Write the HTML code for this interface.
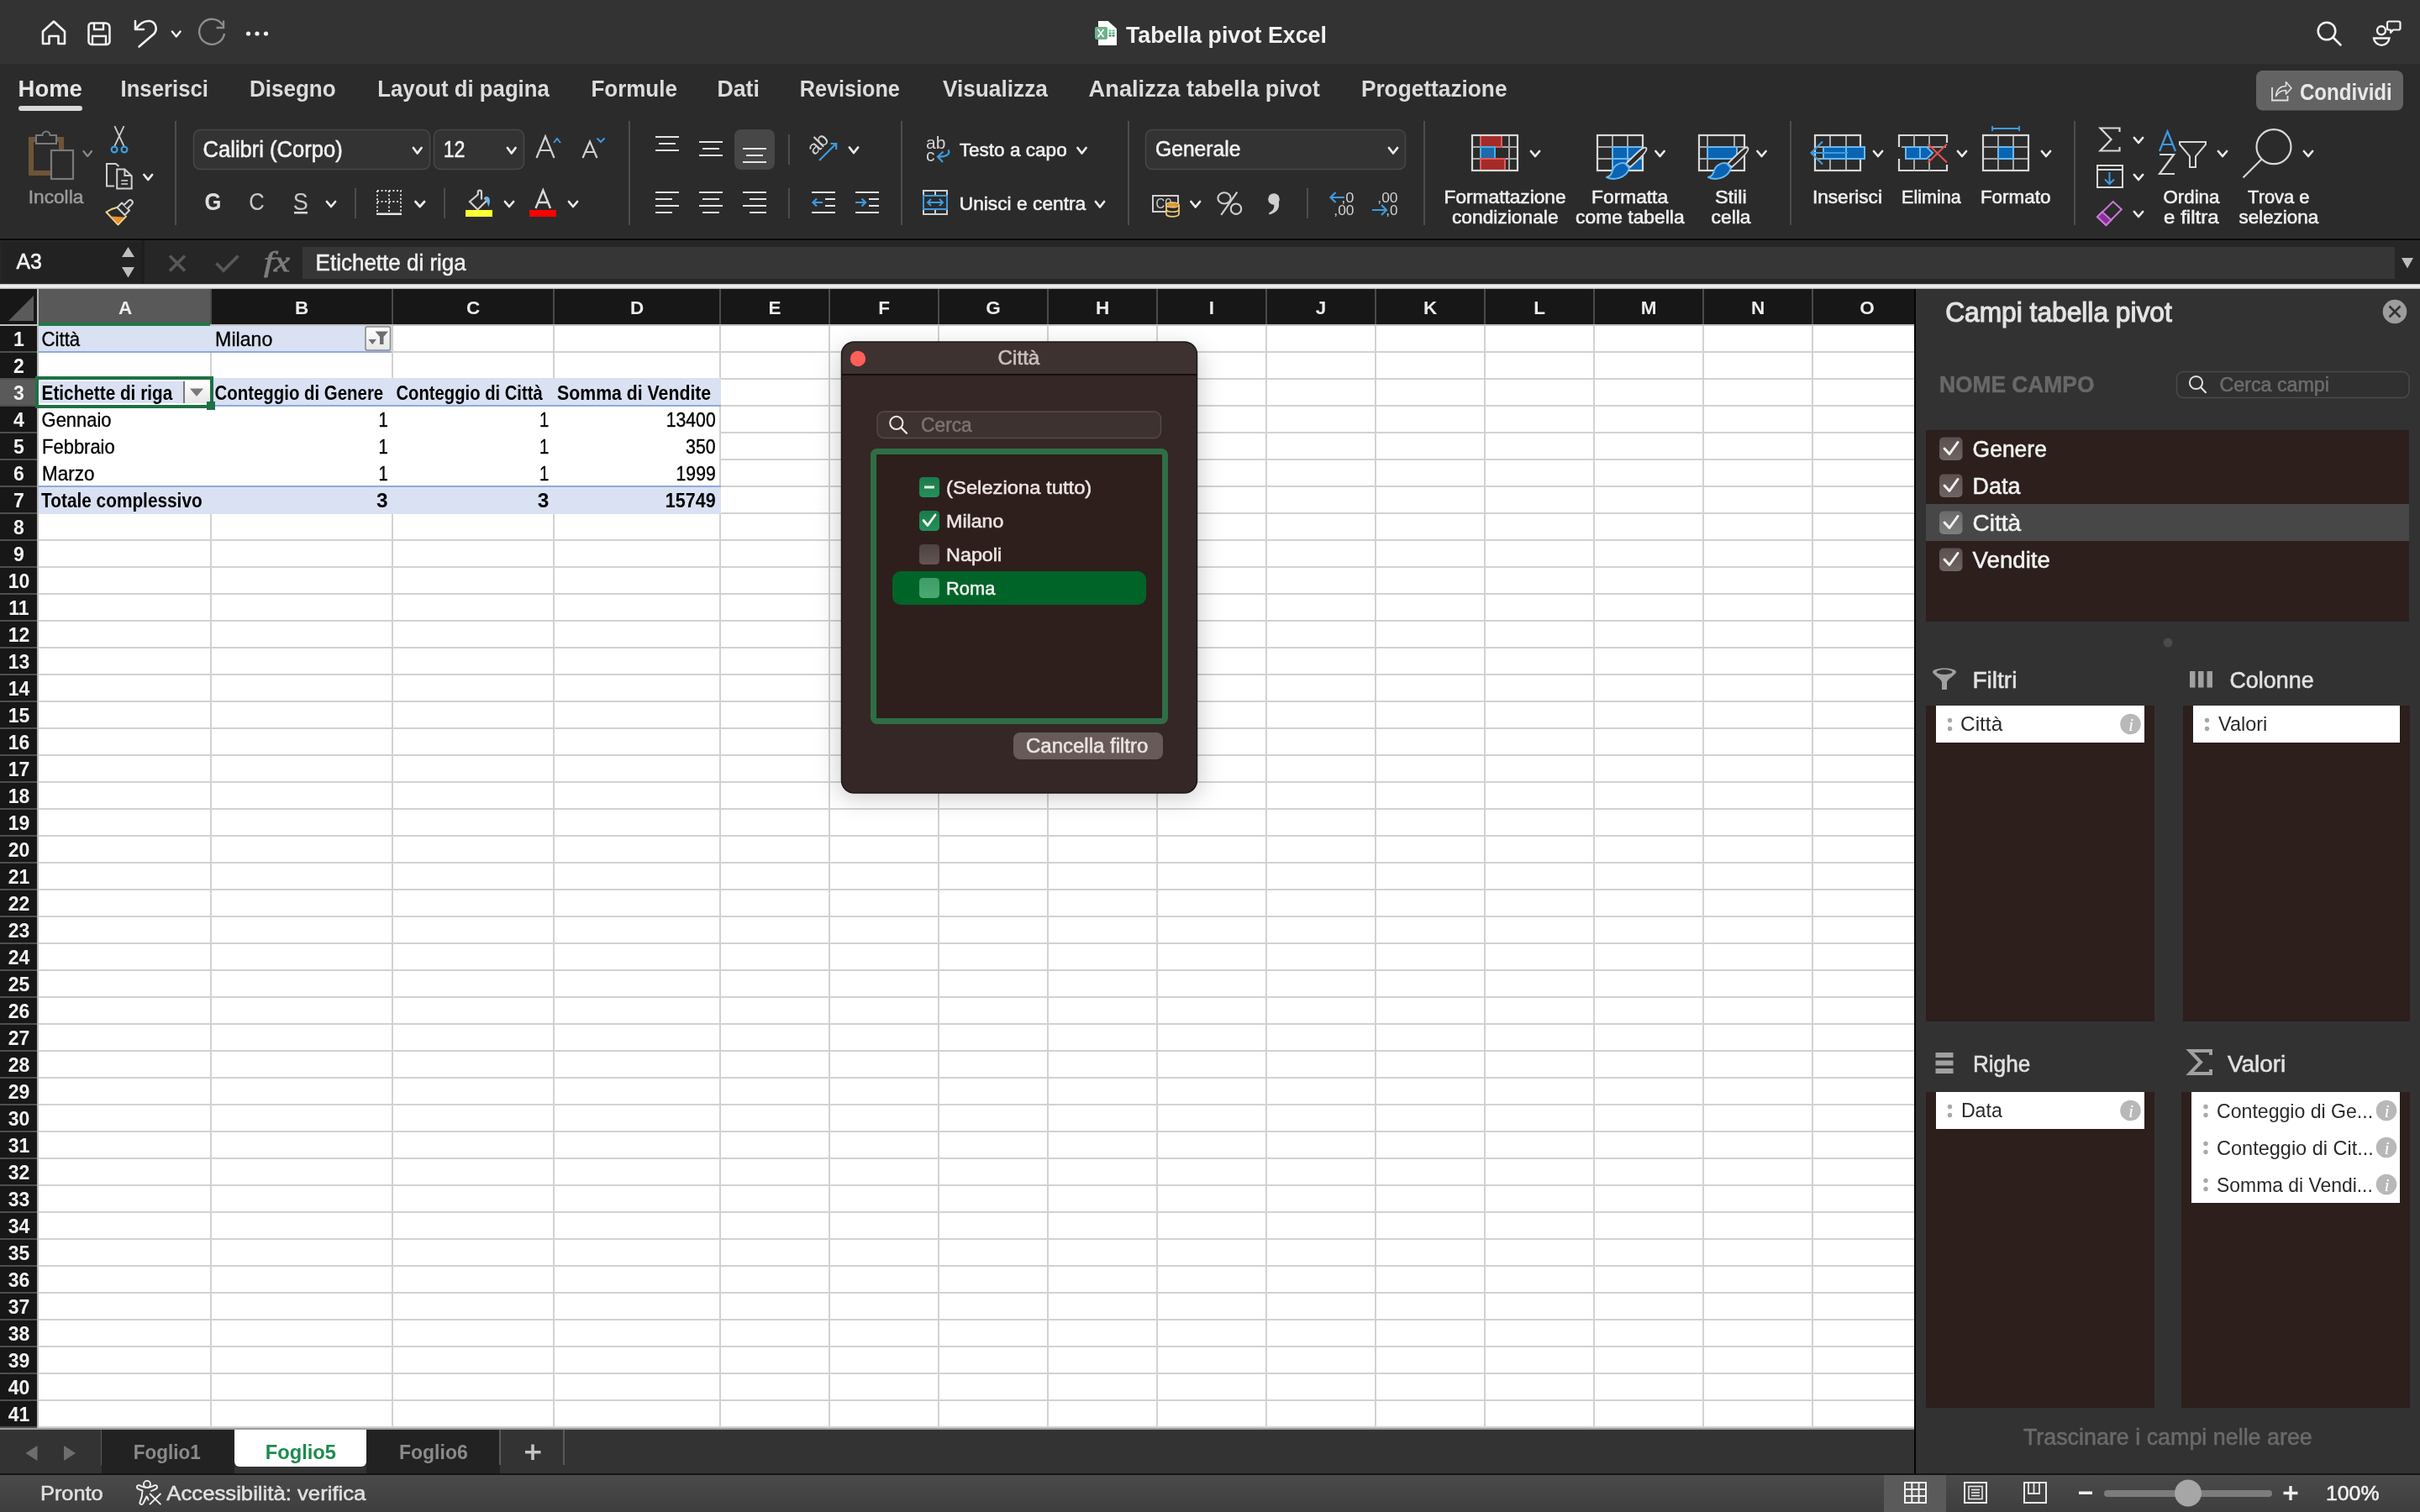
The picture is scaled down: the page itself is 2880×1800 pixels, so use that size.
<!DOCTYPE html>
<html lang="it"><head><meta charset="utf-8"><title>Tabella pivot Excel</title>
<style>
html,body{margin:0;padding:0;background:#2b2b2b;overflow:hidden;width:2880px;height:1800px}
svg{display:block;position:absolute;left:0;top:0}

</style></head><body>
<svg width="2880" height="1800" viewBox="0 0 2880 1800" style="will-change:transform">
<rect x="0" y="0" width="2880" height="76" fill="#333333" />
<rect x="0" y="76" width="2880" height="208" fill="#2b2b2b" />
<rect x="0" y="284" width="2880" height="2" fill="#0a0a0a" />
<path d="M51,52 V37.5 L64,25.5 L77,37.5 V52 H69.5 V43 H58.5 V52 Z" fill="none" stroke="#f2f2f2" stroke-width="2.6" stroke-linejoin="round"/>
<path d="M109,27.5 H125 Q130.5,27.5 130.5,33 V49.5 A3.5,3.5 0 0 1 127,53 H109 A3.5,3.5 0 0 1 105.5,49.5 V31 A3.5,3.5 0 0 1 109,27.5 Z" fill="none" stroke="#f2f2f2" stroke-width="2.5" />
<path d="M112,28 V35 H123 V28" fill="none" stroke="#f2f2f2" stroke-width="2.4" />
<path d="M110,52 V43 H126 V52" fill="none" stroke="#f2f2f2" stroke-width="2.4" />
<path d="M161,25 V35 H171" fill="none" stroke="#f2f2f2" stroke-width="2.6" stroke-linecap="round" stroke-linejoin="round"/>
<path d="M161.5,34.5 C167,27 173,24.5 178,25 C185,26 188,34 183.5,40 L165.5,55.5" fill="none" stroke="#f2f2f2" stroke-width="2.6" stroke-linecap="round"/>
<path d="M204.9,37.5 L209.75,43.5 L214.6,37.5" fill="none" stroke="#f2f2f2" stroke-width="2.4" stroke-linecap="round" stroke-linejoin="round"/>
<path d="M265,30 A15,15 0 1 0 267,40" fill="none" stroke="#8c8c8c" stroke-width="2.4" />
<path d="M266,24.5 V33 H257.5" fill="none" stroke="#8c8c8c" stroke-width="2.4" />
<circle cx="295.5" cy="40" r="2.6" fill="#f2f2f2" />
<circle cx="306" cy="40" r="2.6" fill="#f2f2f2" />
<circle cx="316.5" cy="40" r="2.6" fill="#f2f2f2" />
<path d="M1307,25 H1318.6 L1329,34.3 V54 H1307 Z" fill="#ffffff" />
<rect x="1319.5" y="35.5" width="3.0" height="2.0" fill="#5cc390" />
<rect x="1323.5" y="35.5" width="3.0" height="2.0" fill="#5cc390" />
<rect x="1319.5" y="38.5" width="3.0" height="2.0" fill="#4aa67a" />
<rect x="1323.5" y="38.5" width="3.0" height="2.0" fill="#4aa67a" />
<rect x="1319.5" y="41.5" width="3.0" height="2.0" fill="#3f7a5e" />
<rect x="1323.5" y="41.5" width="3.0" height="2.0" fill="#3f7a5e" />
<rect x="1303" y="32" width="15" height="15" fill="#6fb08e" rx="2" />
<path d="M1306.5,35 L1313.5,44 M1313.5,35 L1306.5,44" fill="none" stroke="#ffffff" stroke-width="1.6" />
<text x="1339.9" y="50.5" font-family="Liberation Sans" font-size="28.20" font-weight="bold" fill="#f2f2f2" textLength="239.0" lengthAdjust="spacingAndGlyphs" >Tabella pivot Excel</text>
<circle cx="2769" cy="37" r="10.3" fill="none" stroke="#f2f2f2" stroke-width="2.5" />
<line x1="2776.5" y1="44.5" x2="2785.5" y2="53.5" stroke="#f2f2f2" stroke-width="2.6" stroke-linecap="round"/>
<circle cx="2834" cy="36.3" r="5" fill="none" stroke="#f2f2f2" stroke-width="2.4" />
<path d="M2825,45.5 H2843.5 A9.3,9.3 0 0 1 2825,45.5 Z" fill="none" stroke="#f2f2f2" stroke-width="2.4" />
<path d="M2843,25.5 H2854.5 A2,2 0 0 1 2856.5,27.5 V33.5 A2,2 0 0 1 2854.5,35.5 H2848 L2845,39 V35.5 H2843 A2,2 0 0 1 2841,33.5 V27.5 A2,2 0 0 1 2843,25.5 Z" fill="none" stroke="#f2f2f2" stroke-width="2.2" stroke-linejoin="round"/>
<text x="21.6" y="114.5" font-family="Liberation Sans" font-size="28.05" font-weight="bold" fill="#e6e6e6" textLength="76.3" lengthAdjust="spacingAndGlyphs" >Home</text>
<text x="143.5" y="114.5" font-family="Liberation Sans" font-size="28.05" font-weight="bold" fill="#dcdcdc" textLength="104.4" lengthAdjust="spacingAndGlyphs" >Inserisci</text>
<text x="296.9" y="114.5" font-family="Liberation Sans" font-size="28.05" font-weight="bold" fill="#dcdcdc" textLength="102.8" lengthAdjust="spacingAndGlyphs" >Disegno</text>
<text x="449.3" y="114.5" font-family="Liberation Sans" font-size="28.05" font-weight="bold" fill="#dcdcdc" textLength="204.5" lengthAdjust="spacingAndGlyphs" >Layout di pagina</text>
<text x="703.4" y="114.5" font-family="Liberation Sans" font-size="28.05" font-weight="bold" fill="#dcdcdc" textLength="102.5" lengthAdjust="spacingAndGlyphs" >Formule</text>
<text x="853.4" y="114.5" font-family="Liberation Sans" font-size="28.05" font-weight="bold" fill="#dcdcdc" textLength="50.5" lengthAdjust="spacingAndGlyphs" >Dati</text>
<text x="951.8" y="114.5" font-family="Liberation Sans" font-size="28.05" font-weight="bold" fill="#dcdcdc" textLength="119.1" lengthAdjust="spacingAndGlyphs" >Revisione</text>
<text x="1121.9" y="114.5" font-family="Liberation Sans" font-size="28.05" font-weight="bold" fill="#dcdcdc" textLength="125.0" lengthAdjust="spacingAndGlyphs" >Visualizza</text>
<text x="1295.6" y="114.5" font-family="Liberation Sans" font-size="28.05" font-weight="bold" fill="#dcdcdc" textLength="275.3" lengthAdjust="spacingAndGlyphs" >Analizza tabella pivot</text>
<text x="1619.9" y="114.5" font-family="Liberation Sans" font-size="28.05" font-weight="bold" fill="#dcdcdc" textLength="173.6" lengthAdjust="spacingAndGlyphs" >Progettazione</text>
<rect x="22" y="126" width="76" height="6" fill="#d9d9d9" rx="3" />
<rect x="2685" y="84" width="175" height="47.5" fill="#636363" rx="8" />
<path d="M2704,104 V119.5 H2722.5 V114" fill="none" stroke="#e0e0e0" stroke-width="1.8" />
<path d="M2708.5,114.5 C2709.5,106 2714.5,102.5 2720.5,102.5 V97.5 L2727,105 L2720.5,112 V107.5 C2714.5,107.5 2711,110 2708.5,114.5 Z" fill="none" stroke="#e0e0e0" stroke-width="1.6" stroke-linejoin="round"/>
<text x="2736.9" y="118.5" font-family="Liberation Sans" font-size="26.89" font-weight="bold" fill="#e8e8e8" textLength="109.9" lengthAdjust="spacingAndGlyphs" >Condividi</text>
<rect x="37" y="166" width="36" height="40" fill="none" stroke="#6e5538" stroke-width="6" />
<path d="M43,171 V161 H50.5 A4.5,4.5 0 0 1 59.5,161 H67 V171 Z" fill="#2b2b2b" stroke="#7a7a7a" stroke-width="2" />
<rect x="61" y="179" width="26" height="34" fill="#2b2b2b" stroke="#7a7a7a" stroke-width="2.2" />
<path d="M99.4,180 L104.25,186 L109.1,180" fill="none" stroke="#8a8a8a" stroke-width="2.2" stroke-linecap="round" stroke-linejoin="round"/>
<text x="33.8" y="242" font-family="Liberation Sans" font-size="22.09" font-weight="normal" fill="#9a9a9a" stroke="#9a9a9a" stroke-width="0.55" textLength="65.5" lengthAdjust="spacingAndGlyphs" >Incolla</text>
<path d="M136.4,150.2 L147.5,173.8 M147.5,150.2 L136.4,173.8" fill="none" stroke="#d0d0d0" stroke-width="1.8" />
<circle cx="136.1" cy="178" r="3.4" fill="none" stroke="#3d9be0" stroke-width="2.2" />
<circle cx="148" cy="178" r="3.4" fill="none" stroke="#3d9be0" stroke-width="2.2" />
<path d="M136,221.5 H127 V195 H137.8 L141.5,198" fill="none" stroke="#d0d0d0" stroke-width="2" />
<path d="M139.2,201.5 H148.4 L156.7,209.5 V224.6 H139.2 Z" fill="none" stroke="#d0d0d0" stroke-width="2" />
<path d="M148.4,201.5 V209 H156.7" fill="none" stroke="#d0d0d0" stroke-width="2" />
<path d="M144.3,215 H152.1 M144.3,219 H152.1" fill="none" stroke="#b0b0b0" stroke-width="1.8" />
<path d="M171.4,208 L176.25,214 L181.1,208" fill="none" stroke="#ececec" stroke-width="2.7" stroke-linecap="round" stroke-linejoin="round"/>
<path d="M139,247 Q132,248.5 126.5,252.5 L140.5,267.5 Q145.5,262 150.5,257" fill="#2b2b2b" stroke="#f5d58a" stroke-width="2" stroke-linejoin="round"/>
<path d="M131.5,257.5 L140.5,266 L148,258.5 Z" fill="#e8922a" />
<path d="M139.5,247 L145,241.5 L154,250.5 L148.5,256 Z" fill="#2b2b2b" stroke="#d4d4d4" stroke-width="2" stroke-linejoin="round"/>
<path d="M147.6,244.1 L153,238.7 A3,3 0 0 1 157.2,242.9 L151.8,248.3" fill="#2b2b2b" stroke="#d4d4d4" stroke-width="2" />
<rect x="208" y="144" width="2" height="124" fill="#4d4d4d" />
<rect x="230.5" y="154.5" width="281" height="47" fill="#333333" rx="8" stroke="#474747" stroke-width="1.5" />
<text x="241.5" y="186.5" font-family="Liberation Sans" font-size="26.89" font-weight="normal" fill="#f2f2f2" stroke="#f2f2f2" stroke-width="0.55" textLength="166.3" lengthAdjust="spacingAndGlyphs" >Calibri (Corpo)</text>
<path d="M491.9,176 L496.75,182.5 L501.6,176" fill="none" stroke="#ececec" stroke-width="2.7" stroke-linecap="round" stroke-linejoin="round"/>
<rect x="516.5" y="154.5" width="107" height="47" fill="#333333" rx="8" stroke="#474747" stroke-width="1.5" />
<text x="527.7" y="186.5" font-family="Liberation Sans" font-size="26.89" font-weight="normal" fill="#f2f2f2" stroke="#f2f2f2" stroke-width="0.55" textLength="25.8" lengthAdjust="spacingAndGlyphs" >12</text>
<path d="M603.9,176 L608.75,182.5 L613.6,176" fill="none" stroke="#ececec" stroke-width="2.7" stroke-linecap="round" stroke-linejoin="round"/>
<path d="M638.5,188 L649,162.5 L659.5,188 M642.5,179 H655.5" fill="none" stroke="#d0d0d0" stroke-width="2.2" />
<path d="M659,170 L663,165 L667,170" fill="none" stroke="#3d9be0" stroke-width="2" />
<path d="M693.5,188 L702,168.5 L710.5,188 M696.5,181 H707.5" fill="none" stroke="#d0d0d0" stroke-width="2.2" />
<path d="M710.5,164.5 L715,169 L719.5,164.5" fill="none" stroke="#3d9be0" stroke-width="2" />
<text x="243.4" y="250" font-family="Liberation Sans" font-size="29.07" font-weight="bold" fill="#dedede" textLength="19.9" lengthAdjust="spacingAndGlyphs" >G</text>
<text x="296.3" y="250" font-family="Liberation Sans" font-size="29.07" font-weight="normal" fill="#c8c8c8" textLength="18.5" lengthAdjust="spacingAndGlyphs" >C</text>
<text x="348.8" y="250" font-family="Liberation Sans" font-size="29.07" font-weight="normal" fill="#c8c8c8" textLength="18.0" lengthAdjust="spacingAndGlyphs" >S</text>
<rect x="350" y="252" width="16" height="2.5" fill="#d8d8d8" />
<path d="M388.9,240 L394.0,246 L399.1,240" fill="none" stroke="#ececec" stroke-width="2.7" stroke-linecap="round" stroke-linejoin="round"/>
<rect x="422" y="224" width="2" height="36" fill="#4d4d4d" />
<g stroke="#d8d8d8" stroke-width="2" stroke-dasharray="2 2.6" fill="none">
<path d="M449,227 H477 V253 M449,227 V253 M449,240 H477 M463,227 V253"/>
</g>
<rect x="448" y="253.5" width="30" height="2.5" fill="#e8e8e8" />
<path d="M494.4,240 L499.75,246 L505.1,240" fill="none" stroke="#ececec" stroke-width="2.7" stroke-linecap="round" stroke-linejoin="round"/>
<rect x="528" y="224" width="2" height="36" fill="#4d4d4d" />
<path d="M569,231.5 L559,240 L568.5,249.5 L579.5,238.5 L576.5,235.5" fill="none" stroke="#d0d0d0" stroke-width="2.2" stroke-linejoin="miter"/>
<path d="M573,237.5 V228.8 A2.1,2.1 0 0 0 568.8,228.8 V232" fill="none" stroke="#d0d0d0" stroke-width="2.2" />
<path d="M577,234.5 C580,233 583,235 583,239 C583,242 582,244 581.3,246.5 C580.5,242 579,239 577,237.5 Z" fill="#6cb4e8" />
<rect x="554" y="250" width="32" height="8" fill="#ffff33" />
<path d="M600.9,240 L606.0,246 L611.1,240" fill="none" stroke="#ececec" stroke-width="2.7" stroke-linecap="round" stroke-linejoin="round"/>
<path d="M637.5,248 L646.3,226.5 L655,248 M640.5,241 H652" fill="none" stroke="#dadada" stroke-width="2.4" />
<rect x="630" y="250" width="32" height="8" fill="#ff0000" />
<path d="M676.9,240 L682.0,246 L687.1,240" fill="none" stroke="#ececec" stroke-width="2.7" stroke-linecap="round" stroke-linejoin="round"/>
<rect x="748" y="144" width="2" height="124" fill="#4d4d4d" />
<rect x="780" y="162" width="28" height="2" fill="#e4e4e4" />
<rect x="784" y="170" width="20" height="2" fill="#e4e4e4" />
<rect x="780" y="178" width="28" height="2" fill="#e4e4e4" />
<rect x="832" y="168" width="28" height="2" fill="#e4e4e4" />
<rect x="836" y="176" width="20" height="2" fill="#e4e4e4" />
<rect x="832" y="184" width="28" height="2" fill="#e4e4e4" />
<rect x="874" y="154" width="48" height="48" fill="#474747" rx="8" />
<rect x="884" y="176" width="28" height="2" fill="#e4e4e4" />
<rect x="888" y="184" width="20" height="2" fill="#e4e4e4" />
<rect x="884" y="192" width="28" height="2" fill="#e4e4e4" />
<rect x="780" y="228" width="28" height="2" fill="#e4e4e4" />
<rect x="780" y="236" width="20" height="2" fill="#e4e4e4" />
<rect x="780" y="244" width="28" height="2" fill="#e4e4e4" />
<rect x="780" y="252" width="20" height="2" fill="#e4e4e4" />
<rect x="832" y="228" width="28" height="2" fill="#e4e4e4" />
<rect x="836" y="236" width="20" height="2" fill="#e4e4e4" />
<rect x="832" y="244" width="28" height="2" fill="#e4e4e4" />
<rect x="836" y="252" width="20" height="2" fill="#e4e4e4" />
<rect x="884" y="228" width="28" height="2" fill="#e4e4e4" />
<rect x="892" y="236" width="20" height="2" fill="#e4e4e4" />
<rect x="884" y="244" width="28" height="2" fill="#e4e4e4" />
<rect x="892" y="252" width="20" height="2" fill="#e4e4e4" />
<rect x="938" y="160" width="2" height="36" fill="#4d4d4d" />
<rect x="938" y="224" width="2" height="36" fill="#4d4d4d" />
<text x="0" y="0" font-family="Liberation Sans" font-size="23" fill="#d4d4d4" transform="translate(969.5,185.5) rotate(-45)">ab</text>
<path d="M975,191 L995,171 M988.5,171 H995.2 V178" fill="none" stroke="#3d9be0" stroke-width="2.2" />
<path d="M1010.9,175.5 L1016.0,182 L1021.1,175.5" fill="none" stroke="#ececec" stroke-width="2.7" stroke-linecap="round" stroke-linejoin="round"/>
<rect x="966" y="228" width="28" height="2" fill="#e4e4e4" />
<rect x="982" y="236" width="12" height="2" fill="#e4e4e4" />
<rect x="982" y="244" width="12" height="2" fill="#e4e4e4" />
<rect x="966" y="252" width="28" height="2" fill="#e4e4e4" />
<path d="M979,241 H967.5 M972,236.5 L967.5,241 L972,245.5" fill="none" stroke="#3d9be0" stroke-width="2.2" />
<rect x="1018" y="228" width="28" height="2" fill="#e4e4e4" />
<rect x="1034" y="236" width="12" height="2" fill="#e4e4e4" />
<rect x="1034" y="244" width="12" height="2" fill="#e4e4e4" />
<rect x="1018" y="252" width="28" height="2" fill="#e4e4e4" />
<path d="M1018,241 H1030 M1025.5,236.5 L1030,241 L1025.5,245.5" fill="none" stroke="#3d9be0" stroke-width="2.2" />
<rect x="1072" y="144" width="2" height="124" fill="#4d4d4d" />
<text x="1102" y="177.4" font-family="Liberation Sans" font-size="21" fill="#d4d4d4">ab</text>
<text x="1102" y="191.7" font-family="Liberation Sans" font-size="21" fill="#d4d4d4">c</text>
<path d="M1128.6,178.2 C1131,183 1127,187 1116.5,186.5 M1122.5,180.5 L1116,186.5 L1122,193" fill="none" stroke="#3d9be0" stroke-width="2.2" />
<text x="1141.7" y="186.3" font-family="Liberation Sans" font-size="22.82" font-weight="normal" fill="#f0f0f0" stroke="#f0f0f0" stroke-width="0.55" textLength="128.0" lengthAdjust="spacingAndGlyphs" >Testo a capo</text>
<path d="M1282.4,176 L1287.5,182.5 L1292.6,176" fill="none" stroke="#ececec" stroke-width="2.7" stroke-linecap="round" stroke-linejoin="round"/>
<rect x="1099" y="227" width="28" height="28" fill="none" stroke="#d0d0d0" stroke-width="2" />
<line x1="1113" y1="227" x2="1113" y2="233" stroke="#d0d0d0" stroke-width="2" />
<line x1="1113" y1="249" x2="1113" y2="255" stroke="#d0d0d0" stroke-width="2" />
<rect x="1099" y="233" width="28" height="16" fill="#2b2b2b" stroke="#3d9be0" stroke-width="2" />
<path d="M1104,241 H1122 M1108,237 L1104,241 L1108,245 M1118,237 L1122,241 L1118,245" fill="none" stroke="#3d9be0" stroke-width="2" />
<text x="1141.7" y="250.3" font-family="Liberation Sans" font-size="22.82" font-weight="normal" fill="#f0f0f0" stroke="#f0f0f0" stroke-width="0.55" textLength="150.6" lengthAdjust="spacingAndGlyphs" >Unisci e centra</text>
<path d="M1303.9,240 L1309.0,246.5 L1314.1,240" fill="none" stroke="#ececec" stroke-width="2.7" stroke-linecap="round" stroke-linejoin="round"/>
<rect x="1342" y="144" width="2" height="124" fill="#4d4d4d" />
<rect x="1363.5" y="154.5" width="309" height="47" fill="#333333" rx="8" stroke="#474747" stroke-width="1.5" />
<text x="1375.0" y="186.3" font-family="Liberation Sans" font-size="26.16" font-weight="normal" fill="#f2f2f2" stroke="#f2f2f2" stroke-width="0.55" textLength="101.4" lengthAdjust="spacingAndGlyphs" >Generale</text>
<path d="M1652.9,176 L1658.0,182.5 L1663.1,176" fill="none" stroke="#ececec" stroke-width="2.7" stroke-linecap="round" stroke-linejoin="round"/>
<rect x="1372" y="233" width="30" height="19" fill="none" stroke="#d0d0d0" stroke-width="2" />
<text x="1375.4" y="248" font-family="Liberation Sans" font-size="15.99" font-weight="normal" fill="#d0d0d0" textLength="19.1" lengthAdjust="spacingAndGlyphs" >C0</text>
<path d="M1388,244 A7.5,2.8 0 0 1 1403,244 V255 A7.5,2.8 0 0 1 1388,255 Z" fill="#2b2b2b" stroke="#f0c878" stroke-width="1.8" />
<path d="M1388,244 A7.5,2.8 0 0 0 1403,244 M1388,249.5 A7.5,2.8 0 0 0 1403,249.5" fill="none" stroke="#f0c878" stroke-width="1.6" />
<ellipse cx="1395.5" cy="244" rx="6" ry="2" fill="#e89a30"/>
<path d="M1417.4,240 L1422.75,246.5 L1428.1,240" fill="none" stroke="#ececec" stroke-width="2.7" stroke-linecap="round" stroke-linejoin="round"/>
<ellipse cx="1457" cy="235.9" rx="7.6" ry="6.6" fill="none" stroke="#cfcfcf" stroke-width="2.1"/>
<ellipse cx="1471" cy="248.7" rx="6.2" ry="6.2" fill="none" stroke="#cfcfcf" stroke-width="2.1"/>
<path d="M1472.3,228.6 L1453.3,255.8" fill="none" stroke="#cfcfcf" stroke-width="2.2" />
<circle cx="1516" cy="237" r="6.8" fill="#cfcfcf" />
<path d="M1521.5,239 C1524,248 1519,253.5 1510.5,255.5 L1510,253.5 C1515.5,251 1517,247 1516,243 Z" fill="#cfcfcf" />
<rect x="1555" y="224" width="2" height="36" fill="#4d4d4d" />
<path d="M1600,235 H1583.5 M1589.5,229 L1583.5,235 L1589.5,241" fill="none" stroke="#3d9be0" stroke-width="2.2" />
<text x="1596.3" y="241" font-family="Liberation Sans" font-size="16.72" font-weight="normal" fill="#d0d0d0" textLength="15.2" lengthAdjust="spacingAndGlyphs" >,0</text>
<text x="1587.3" y="256" font-family="Liberation Sans" font-size="16.72" font-weight="normal" fill="#d0d0d0" textLength="24.2" lengthAdjust="spacingAndGlyphs" >,00</text>
<text x="1639.3" y="241" font-family="Liberation Sans" font-size="16.72" font-weight="normal" fill="#d0d0d0" textLength="24.2" lengthAdjust="spacingAndGlyphs" >,00</text>
<path d="M1633,250 H1650 M1644,244 L1650,250 L1644,256" fill="none" stroke="#3d9be0" stroke-width="2.2" />
<text x="1649.3" y="256" font-family="Liberation Sans" font-size="16.72" font-weight="normal" fill="#d0d0d0" textLength="14.2" lengthAdjust="spacingAndGlyphs" >,0</text>
<rect x="1694" y="144" width="2" height="124" fill="#4d4d4d" />
<rect x="1752" y="174" width="54" height="2" fill="#a8a8a8" />
<rect x="1752" y="188" width="54" height="2" fill="#a8a8a8" />
<rect x="1761" y="161" width="2" height="42" fill="#a8a8a8" />
<rect x="1795" y="161" width="2" height="42" fill="#a8a8a8" />
<rect x="1762" y="161" width="25" height="14" fill="#a52a2a" stroke="#e05a5a" stroke-width="2" />
<rect x="1762" y="175" width="17" height="14" fill="#1f6aa8" stroke="#48aee6" stroke-width="2" />
<rect x="1762" y="189" width="29" height="14" fill="#a52a2a" stroke="#e05a5a" stroke-width="2" />
<rect x="1752" y="161" width="54" height="42" fill="none" stroke="#d8d8d8" stroke-width="2.2" />
<path d="M1821.9,180 L1827.0,186 L1832.1,180" fill="none" stroke="#ececec" stroke-width="2.7" stroke-linecap="round" stroke-linejoin="round"/>
<text x="1718.6" y="242" font-family="Liberation Sans" font-size="21.80" font-weight="normal" fill="#f0f0f0" stroke="#f0f0f0" stroke-width="0.55" textLength="145.0" lengthAdjust="spacingAndGlyphs" >Formattazione</text>
<text x="1727.9" y="265.5" font-family="Liberation Sans" font-size="21.80" font-weight="normal" fill="#f0f0f0" stroke="#f0f0f0" stroke-width="0.55" textLength="126.7" lengthAdjust="spacingAndGlyphs" >condizionale</text>
<rect x="1901" y="174" width="54" height="2" fill="#a8a8a8" />
<rect x="1901" y="188" width="54" height="2" fill="#a8a8a8" />
<rect x="1918" y="161" width="2" height="42" fill="#a8a8a8" />
<rect x="1936" y="161" width="2" height="42" fill="#a8a8a8" />
<rect x="1919" y="175" width="36" height="28" fill="#0a64b4" stroke="#6ab8ee" stroke-width="2" />
<rect x="1918" y="188" width="38" height="2" fill="#6ab8ee" />
<rect x="1936" y="174" width="2" height="30" fill="#6ab8ee" />
<rect x="1901" y="161" width="54" height="42" fill="none" stroke="#d8d8d8" stroke-width="2.2" />
<g transform="translate(0,0)">
<path d="M1959,176 C1961,178 1958,183 1940,199 L1935,195 C1951,179 1956,174 1959,176 Z" fill="#2b2b2b" stroke="#d8d8d8" stroke-width="1.8" />
<path d="M1934,194.5 C1929,193 1921,196 1919,203 C1918,208 1916,210 1912,211 C1920,215 1935,213 1939,200 Z" fill="#0a64b4" stroke="#6ab8ee" stroke-width="2" stroke-linejoin="round"/>
</g>
<path d="M1970.4,180 L1975.5,186 L1980.6,180" fill="none" stroke="#ececec" stroke-width="2.7" stroke-linecap="round" stroke-linejoin="round"/>
<text x="1894.1" y="242" font-family="Liberation Sans" font-size="21.80" font-weight="normal" fill="#f0f0f0" stroke="#f0f0f0" stroke-width="0.55" textLength="91.0" lengthAdjust="spacingAndGlyphs" >Formatta</text>
<text x="1875.1" y="265.5" font-family="Liberation Sans" font-size="21.80" font-weight="normal" fill="#f0f0f0" stroke="#f0f0f0" stroke-width="0.55" textLength="129.5" lengthAdjust="spacingAndGlyphs" >come tabella</text>
<rect x="2022" y="174" width="58" height="2" fill="#a8a8a8" />
<rect x="2022" y="188" width="18" height="2" fill="#a8a8a8" />
<rect x="2031" y="161" width="2" height="42" fill="#a8a8a8" />
<rect x="2063" y="161" width="2" height="14" fill="#a8a8a8" />
<rect x="2032" y="175" width="35" height="14" fill="#0a64b4" stroke="#6ab8ee" stroke-width="2" />
<rect x="2022" y="161" width="54" height="42" fill="none" stroke="#d8d8d8" stroke-width="2.2" />
<rect x="2031" y="175" width="37" height="14" fill="#0a64b4" />
<rect x="2032" y="175" width="35" height="14" fill="none" stroke="#6ab8ee" stroke-width="2" />
<g transform="translate(121,0)">
<path d="M1959,176 C1961,178 1958,183 1940,199 L1935,195 C1951,179 1956,174 1959,176 Z" fill="#2b2b2b" stroke="#d8d8d8" stroke-width="1.8" />
<path d="M1934,194.5 C1929,193 1921,196 1919,203 C1918,208 1916,210 1912,211 C1920,215 1935,213 1939,200 Z" fill="#0a64b4" stroke="#6ab8ee" stroke-width="2" stroke-linejoin="round"/>
</g>
<path d="M2091.4,180 L2096.5,186 L2101.6,180" fill="none" stroke="#ececec" stroke-width="2.7" stroke-linecap="round" stroke-linejoin="round"/>
<text x="2040.9" y="242" font-family="Liberation Sans" font-size="21.80" font-weight="normal" fill="#f0f0f0" stroke="#f0f0f0" stroke-width="0.55" textLength="37.7" lengthAdjust="spacingAndGlyphs" >Stili</text>
<text x="2036.6" y="265.5" font-family="Liberation Sans" font-size="21.80" font-weight="normal" fill="#f0f0f0" stroke="#f0f0f0" stroke-width="0.55" textLength="47.0" lengthAdjust="spacingAndGlyphs" >cella</text>
<rect x="2130" y="144" width="2" height="124" fill="#4d4d4d" />
<rect x="2177" y="161" width="2" height="42" fill="#a8a8a8" />
<rect x="2196" y="161" width="2" height="42" fill="#a8a8a8" />
<rect x="2160" y="174" width="53" height="2" fill="#a8a8a8" />
<rect x="2160" y="188" width="53" height="2" fill="#a8a8a8" />
<rect x="2160" y="161" width="54" height="42" fill="none" stroke="#d8d8d8" stroke-width="2.2" />
<rect x="2170" y="175" width="49" height="14" fill="#0a64b4" stroke="#6ab8ee" stroke-width="2" />
<rect x="2196" y="175" width="2" height="14" fill="#6ab8ee" />
<path d="M2199,182 H2156.5 M2169,168.5 L2155.5,182 L2169,195.5" fill="none" stroke="#3d9be0" stroke-width="2.2" />
<path d="M2229.9,180 L2235.0,186 L2240.1,180" fill="none" stroke="#ececec" stroke-width="2.7" stroke-linecap="round" stroke-linejoin="round"/>
<text x="2156.9" y="241.7" font-family="Liberation Sans" font-size="21.80" font-weight="normal" fill="#f0f0f0" stroke="#f0f0f0" stroke-width="0.55" textLength="83.1" lengthAdjust="spacingAndGlyphs" >Inserisci</text>
<rect x="2263" y="174" width="53" height="2" fill="#a8a8a8" />
<path d="M2260,175 V161 H2317 V170 M2260,189 V203 H2317 V196" fill="none" stroke="#d8d8d8" stroke-width="2.2" />
<rect x="2277" y="161" width="2" height="14" fill="#a8a8a8" />
<rect x="2277" y="189" width="2" height="14" fill="#a8a8a8" />
<rect x="2295" y="161" width="2" height="14" fill="#a8a8a8" />
<rect x="2295" y="189" width="2" height="14" fill="#a8a8a8" />
<path d="M2268,175 H2293 L2300,182 L2293,189 H2268 Z" fill="#0a64b4" stroke="#6ab8ee" stroke-width="2" />
<rect x="2284" y="175" width="2" height="14" fill="#6ab8ee" />
<path d="M2294.5,171.5 L2317,193.5 M2317,171.5 L2294.5,193.5" fill="none" stroke="#e05050" stroke-width="2.2" />
<path d="M2329.9,180 L2335.0,186 L2340.1,180" fill="none" stroke="#ececec" stroke-width="2.7" stroke-linecap="round" stroke-linejoin="round"/>
<text x="2263.1" y="241.7" font-family="Liberation Sans" font-size="21.80" font-weight="normal" fill="#f0f0f0" stroke="#f0f0f0" stroke-width="0.55" textLength="70.5" lengthAdjust="spacingAndGlyphs" >Elimina</text>
<rect x="2377" y="161" width="2" height="42" fill="#a8a8a8" />
<rect x="2395" y="161" width="2" height="42" fill="#a8a8a8" />
<rect x="2360" y="174" width="54" height="2" fill="#a8a8a8" />
<rect x="2360" y="188" width="54" height="2" fill="#a8a8a8" />
<rect x="2360" y="161" width="54" height="42" fill="none" stroke="#d8d8d8" stroke-width="2.2" />
<rect x="2378" y="175" width="18" height="14" fill="#0a64b4" stroke="#6ab8ee" stroke-width="2" />
<path d="M2371,153 H2403 M2371,150 V156 M2403,150 V156" fill="none" stroke="#3d9be0" stroke-width="1.8" />
<path d="M2429.9,180 L2435.0,186 L2440.1,180" fill="none" stroke="#ececec" stroke-width="2.7" stroke-linecap="round" stroke-linejoin="round"/>
<text x="2356.9" y="241.7" font-family="Liberation Sans" font-size="21.80" font-weight="normal" fill="#f0f0f0" stroke="#f0f0f0" stroke-width="0.55" textLength="83.7" lengthAdjust="spacingAndGlyphs" >Formato</text>
<rect x="2468" y="144" width="2" height="124" fill="#4d4d4d" />
<path d="M2522.5,157 V152.5 H2499.5 L2512.5,166 L2499.5,179.5 H2522.5 V175" fill="none" stroke="#d8d8d8" stroke-width="2.2" stroke-linejoin="miter"/>
<path d="M2539.9,164 L2545.0,170 L2550.1,164" fill="none" stroke="#ececec" stroke-width="2.7" stroke-linecap="round" stroke-linejoin="round"/>
<rect x="2496" y="197" width="30" height="26" fill="none" stroke="#d8d8d8" stroke-width="2" />
<rect x="2497" y="201" width="28" height="2" fill="#d8d8d8" />
<path d="M2510.5,205 V219 M2505,213.5 L2510.5,219 L2516,213.5" fill="none" stroke="#3d9be0" stroke-width="2" />
<path d="M2539.9,208 L2545.0,214 L2550.1,208" fill="none" stroke="#ececec" stroke-width="2.7" stroke-linecap="round" stroke-linejoin="round"/>
<path d="M2514.7,240 L2524.8,249.2 L2506.4,268 L2496,258.2 Z" fill="none" stroke="#c77ad6" stroke-width="2" />
<path d="M2501.9,252.2 L2512.5,262 L2506.4,268 L2496,258.2 Z" fill="#8e2d9e" stroke="#c77ad6" stroke-width="2" />
<path d="M2539.9,252 L2545.0,258 L2550.1,252" fill="none" stroke="#ececec" stroke-width="2.7" stroke-linecap="round" stroke-linejoin="round"/>
<path d="M2570,180 L2579.5,156.5 L2589,180 M2573.5,172 H2585.5" fill="none" stroke="#3d9be0" stroke-width="2.2" />
<path d="M2570,184 H2587 L2570,207 H2588" fill="none" stroke="#d8d8d8" stroke-width="2.2" />
<path d="M2594,169 H2625 V172 L2613,186 V199 H2606 V186 L2594,172 Z" fill="none" stroke="#d8d8d8" stroke-width="2" />
<path d="M2639.9,180 L2645.0,186 L2650.1,180" fill="none" stroke="#ececec" stroke-width="2.7" stroke-linecap="round" stroke-linejoin="round"/>
<text x="2574.6" y="241.7" font-family="Liberation Sans" font-size="21.80" font-weight="normal" fill="#f0f0f0" stroke="#f0f0f0" stroke-width="0.55" textLength="66.7" lengthAdjust="spacingAndGlyphs" >Ordina</text>
<text x="2575.1" y="265.5" font-family="Liberation Sans" font-size="21.80" font-weight="normal" fill="#f0f0f0" stroke="#f0f0f0" stroke-width="0.55" textLength="65.5" lengthAdjust="spacingAndGlyphs" >e filtra</text>
<circle cx="2706" cy="174.7" r="20.5" fill="none" stroke="#d8d8d8" stroke-width="2.2" />
<line x1="2691.5" y1="189.5" x2="2669.5" y2="211.5" stroke="#d8d8d8" stroke-width="2.2" />
<path d="M2741.9,180 L2747.0,186 L2752.1,180" fill="none" stroke="#ececec" stroke-width="2.7" stroke-linecap="round" stroke-linejoin="round"/>
<text x="2675.1" y="241.7" font-family="Liberation Sans" font-size="21.80" font-weight="normal" fill="#f0f0f0" stroke="#f0f0f0" stroke-width="0.55" textLength="73.3" lengthAdjust="spacingAndGlyphs" >Trova e</text>
<text x="2664.6" y="265.5" font-family="Liberation Sans" font-size="21.80" font-weight="normal" fill="#f0f0f0" stroke="#f0f0f0" stroke-width="0.55" textLength="94.5" lengthAdjust="spacingAndGlyphs" >seleziona</text>
<rect x="0" y="286" width="2880" height="52" fill="#262626" />
<rect x="2" y="288" width="166" height="48" fill="#222222" />
<rect x="168" y="286" width="4" height="52" fill="#1e1e1e" />
<text x="19.5" y="320" font-family="Liberation Sans" font-size="25.15" font-weight="normal" fill="#f4f4f4" stroke="#f4f4f4" stroke-width="0.55" textLength="30.3" lengthAdjust="spacingAndGlyphs" >A3</text>
<path d="M152.5,294 L160,306 H145 Z" fill="#bdbdbd" />
<path d="M145,318 H160 L152.5,330.5 Z" fill="#bdbdbd" />
<path d="M202,304.5 L220,322.5 M220,304.5 L202,322.5" fill="none" stroke="#585858" stroke-width="3.8" />
<path d="M257.5,313.5 L266,322 L283.5,304.5" fill="none" stroke="#585858" stroke-width="3.8" />
<text x="314" y="323" font-family="Liberation Serif" font-style="italic" font-size="34" fill="#7c7c7c" stroke="#7c7c7c" stroke-width="0.8" textLength="31" lengthAdjust="spacingAndGlyphs">fx</text>
<rect x="360" y="294" width="2490" height="38" fill="#363636" />
<text x="375.6" y="321.5" font-family="Liberation Sans" font-size="26.89" font-weight="normal" fill="#f0f0f0" stroke="#f0f0f0" stroke-width="0.5" textLength="179.2" lengthAdjust="spacingAndGlyphs" >Etichette di riga</text>
<path d="M2858,307 H2872 L2865,319.5 Z" fill="#bdbdbd" />
<defs><linearGradient id="ld" x1="0" y1="0" x2="0" y2="1"><stop offset="0" stop-color="#b8b8b8"/><stop offset="0.35" stop-color="#f4f4f4"/><stop offset="0.7" stop-color="#e8e8e8"/><stop offset="1" stop-color="#a8a8a8"/></linearGradient></defs>
<rect x="0" y="338" width="2880" height="6" fill="url(#ld)" />
<rect x="46" y="388" width="2232" height="1312" fill="#ffffff" />
<rect x="46" y="418" width="2232" height="2" fill="#d2d2d2" />
<rect x="46" y="450" width="2232" height="2" fill="#d2d2d2" />
<rect x="46" y="482" width="2232" height="2" fill="#d2d2d2" />
<rect x="46" y="514" width="2232" height="2" fill="#d2d2d2" />
<rect x="46" y="546" width="2232" height="2" fill="#d2d2d2" />
<rect x="46" y="578" width="2232" height="2" fill="#d2d2d2" />
<rect x="46" y="610" width="2232" height="2" fill="#d2d2d2" />
<rect x="46" y="642" width="2232" height="2" fill="#d2d2d2" />
<rect x="46" y="674" width="2232" height="2" fill="#d2d2d2" />
<rect x="46" y="706" width="2232" height="2" fill="#d2d2d2" />
<rect x="46" y="738" width="2232" height="2" fill="#d2d2d2" />
<rect x="46" y="770" width="2232" height="2" fill="#d2d2d2" />
<rect x="46" y="802" width="2232" height="2" fill="#d2d2d2" />
<rect x="46" y="834" width="2232" height="2" fill="#d2d2d2" />
<rect x="46" y="866" width="2232" height="2" fill="#d2d2d2" />
<rect x="46" y="898" width="2232" height="2" fill="#d2d2d2" />
<rect x="46" y="930" width="2232" height="2" fill="#d2d2d2" />
<rect x="46" y="962" width="2232" height="2" fill="#d2d2d2" />
<rect x="46" y="994" width="2232" height="2" fill="#d2d2d2" />
<rect x="46" y="1026" width="2232" height="2" fill="#d2d2d2" />
<rect x="46" y="1058" width="2232" height="2" fill="#d2d2d2" />
<rect x="46" y="1090" width="2232" height="2" fill="#d2d2d2" />
<rect x="46" y="1122" width="2232" height="2" fill="#d2d2d2" />
<rect x="46" y="1154" width="2232" height="2" fill="#d2d2d2" />
<rect x="46" y="1186" width="2232" height="2" fill="#d2d2d2" />
<rect x="46" y="1218" width="2232" height="2" fill="#d2d2d2" />
<rect x="46" y="1250" width="2232" height="2" fill="#d2d2d2" />
<rect x="46" y="1282" width="2232" height="2" fill="#d2d2d2" />
<rect x="46" y="1314" width="2232" height="2" fill="#d2d2d2" />
<rect x="46" y="1346" width="2232" height="2" fill="#d2d2d2" />
<rect x="46" y="1378" width="2232" height="2" fill="#d2d2d2" />
<rect x="46" y="1410" width="2232" height="2" fill="#d2d2d2" />
<rect x="46" y="1442" width="2232" height="2" fill="#d2d2d2" />
<rect x="46" y="1474" width="2232" height="2" fill="#d2d2d2" />
<rect x="46" y="1506" width="2232" height="2" fill="#d2d2d2" />
<rect x="46" y="1538" width="2232" height="2" fill="#d2d2d2" />
<rect x="46" y="1570" width="2232" height="2" fill="#d2d2d2" />
<rect x="46" y="1602" width="2232" height="2" fill="#d2d2d2" />
<rect x="46" y="1634" width="2232" height="2" fill="#d2d2d2" />
<rect x="46" y="1666" width="2232" height="2" fill="#d2d2d2" />
<rect x="46" y="1698" width="2232" height="2" fill="#d2d2d2" />
<rect x="250" y="388" width="2" height="1312" fill="#d2d2d2" />
<rect x="466" y="388" width="2" height="1312" fill="#d2d2d2" />
<rect x="658" y="388" width="2" height="1312" fill="#d2d2d2" />
<rect x="856" y="388" width="2" height="1312" fill="#d2d2d2" />
<rect x="986" y="388" width="2" height="1312" fill="#d2d2d2" />
<rect x="1116" y="388" width="2" height="1312" fill="#d2d2d2" />
<rect x="1246" y="388" width="2" height="1312" fill="#d2d2d2" />
<rect x="1376" y="388" width="2" height="1312" fill="#d2d2d2" />
<rect x="1506" y="388" width="2" height="1312" fill="#d2d2d2" />
<rect x="1636" y="388" width="2" height="1312" fill="#d2d2d2" />
<rect x="1766" y="388" width="2" height="1312" fill="#d2d2d2" />
<rect x="1896" y="388" width="2" height="1312" fill="#d2d2d2" />
<rect x="2026" y="388" width="2" height="1312" fill="#d2d2d2" />
<rect x="2156" y="388" width="2" height="1312" fill="#d2d2d2" />
<rect x="0" y="344" width="2278" height="42" fill="#171717" />
<rect x="0" y="386" width="2278" height="2" fill="#c0c0c0" />
<rect x="44" y="344" width="2" height="1356" fill="#b9b9b9" />
<path d="M10,382 L40,352 V382 Z" fill="#5a5a5a" />
<rect x="46" y="344" width="204" height="40" fill="#595959" />
<rect x="46" y="384" width="204" height="4" fill="#1f7a45" />
<text x="149.0" y="373.5" text-anchor="middle" font-family="Liberation Sans" font-size="22.5" font-weight="bold" fill="#ececec">A</text>
<rect x="250" y="344" width="2" height="42" fill="#4a4a4a" />
<text x="359.0" y="373.5" text-anchor="middle" font-family="Liberation Sans" font-size="22.5" font-weight="bold" fill="#ececec">B</text>
<rect x="466" y="344" width="2" height="42" fill="#4a4a4a" />
<text x="563.0" y="373.5" text-anchor="middle" font-family="Liberation Sans" font-size="22.5" font-weight="bold" fill="#ececec">C</text>
<rect x="658" y="344" width="2" height="42" fill="#4a4a4a" />
<text x="758.0" y="373.5" text-anchor="middle" font-family="Liberation Sans" font-size="22.5" font-weight="bold" fill="#ececec">D</text>
<rect x="856" y="344" width="2" height="42" fill="#4a4a4a" />
<text x="922.0" y="373.5" text-anchor="middle" font-family="Liberation Sans" font-size="22.5" font-weight="bold" fill="#ececec">E</text>
<rect x="986" y="344" width="2" height="42" fill="#4a4a4a" />
<text x="1052.0" y="373.5" text-anchor="middle" font-family="Liberation Sans" font-size="22.5" font-weight="bold" fill="#ececec">F</text>
<rect x="1116" y="344" width="2" height="42" fill="#4a4a4a" />
<text x="1182.0" y="373.5" text-anchor="middle" font-family="Liberation Sans" font-size="22.5" font-weight="bold" fill="#ececec">G</text>
<rect x="1246" y="344" width="2" height="42" fill="#4a4a4a" />
<text x="1312.0" y="373.5" text-anchor="middle" font-family="Liberation Sans" font-size="22.5" font-weight="bold" fill="#ececec">H</text>
<rect x="1376" y="344" width="2" height="42" fill="#4a4a4a" />
<text x="1442.0" y="373.5" text-anchor="middle" font-family="Liberation Sans" font-size="22.5" font-weight="bold" fill="#ececec">I</text>
<rect x="1506" y="344" width="2" height="42" fill="#4a4a4a" />
<text x="1572.0" y="373.5" text-anchor="middle" font-family="Liberation Sans" font-size="22.5" font-weight="bold" fill="#ececec">J</text>
<rect x="1636" y="344" width="2" height="42" fill="#4a4a4a" />
<text x="1702.0" y="373.5" text-anchor="middle" font-family="Liberation Sans" font-size="22.5" font-weight="bold" fill="#ececec">K</text>
<rect x="1766" y="344" width="2" height="42" fill="#4a4a4a" />
<text x="1832.0" y="373.5" text-anchor="middle" font-family="Liberation Sans" font-size="22.5" font-weight="bold" fill="#ececec">L</text>
<rect x="1896" y="344" width="2" height="42" fill="#4a4a4a" />
<text x="1962.0" y="373.5" text-anchor="middle" font-family="Liberation Sans" font-size="22.5" font-weight="bold" fill="#ececec">M</text>
<rect x="2026" y="344" width="2" height="42" fill="#4a4a4a" />
<text x="2092.0" y="373.5" text-anchor="middle" font-family="Liberation Sans" font-size="22.5" font-weight="bold" fill="#ececec">N</text>
<rect x="2156" y="344" width="2" height="42" fill="#4a4a4a" />
<text x="2222.0" y="373.5" text-anchor="middle" font-family="Liberation Sans" font-size="22.5" font-weight="bold" fill="#ececec">O</text>
<rect x="0" y="388" width="44" height="1312" fill="#171717" />
<rect x="0" y="450" width="44" height="32" fill="#5a5a5a" />
<rect x="0" y="418" width="44" height="2" fill="#4e4e4e" />
<rect x="0" y="450" width="44" height="2" fill="#4e4e4e" />
<rect x="0" y="482" width="44" height="2" fill="#4e4e4e" />
<rect x="0" y="514" width="44" height="2" fill="#4e4e4e" />
<rect x="0" y="546" width="44" height="2" fill="#4e4e4e" />
<rect x="0" y="578" width="44" height="2" fill="#4e4e4e" />
<rect x="0" y="610" width="44" height="2" fill="#4e4e4e" />
<rect x="0" y="642" width="44" height="2" fill="#4e4e4e" />
<rect x="0" y="674" width="44" height="2" fill="#4e4e4e" />
<rect x="0" y="706" width="44" height="2" fill="#4e4e4e" />
<rect x="0" y="738" width="44" height="2" fill="#4e4e4e" />
<rect x="0" y="770" width="44" height="2" fill="#4e4e4e" />
<rect x="0" y="802" width="44" height="2" fill="#4e4e4e" />
<rect x="0" y="834" width="44" height="2" fill="#4e4e4e" />
<rect x="0" y="866" width="44" height="2" fill="#4e4e4e" />
<rect x="0" y="898" width="44" height="2" fill="#4e4e4e" />
<rect x="0" y="930" width="44" height="2" fill="#4e4e4e" />
<rect x="0" y="962" width="44" height="2" fill="#4e4e4e" />
<rect x="0" y="994" width="44" height="2" fill="#4e4e4e" />
<rect x="0" y="1026" width="44" height="2" fill="#4e4e4e" />
<rect x="0" y="1058" width="44" height="2" fill="#4e4e4e" />
<rect x="0" y="1090" width="44" height="2" fill="#4e4e4e" />
<rect x="0" y="1122" width="44" height="2" fill="#4e4e4e" />
<rect x="0" y="1154" width="44" height="2" fill="#4e4e4e" />
<rect x="0" y="1186" width="44" height="2" fill="#4e4e4e" />
<rect x="0" y="1218" width="44" height="2" fill="#4e4e4e" />
<rect x="0" y="1250" width="44" height="2" fill="#4e4e4e" />
<rect x="0" y="1282" width="44" height="2" fill="#4e4e4e" />
<rect x="0" y="1314" width="44" height="2" fill="#4e4e4e" />
<rect x="0" y="1346" width="44" height="2" fill="#4e4e4e" />
<rect x="0" y="1378" width="44" height="2" fill="#4e4e4e" />
<rect x="0" y="1410" width="44" height="2" fill="#4e4e4e" />
<rect x="0" y="1442" width="44" height="2" fill="#4e4e4e" />
<rect x="0" y="1474" width="44" height="2" fill="#4e4e4e" />
<rect x="0" y="1506" width="44" height="2" fill="#4e4e4e" />
<rect x="0" y="1538" width="44" height="2" fill="#4e4e4e" />
<rect x="0" y="1570" width="44" height="2" fill="#4e4e4e" />
<rect x="0" y="1602" width="44" height="2" fill="#4e4e4e" />
<rect x="0" y="1634" width="44" height="2" fill="#4e4e4e" />
<rect x="0" y="1666" width="44" height="2" fill="#4e4e4e" />
<rect x="0" y="1698" width="44" height="2" fill="#4e4e4e" />
<text x="22.5" y="412" text-anchor="middle" font-family="Liberation Sans" font-size="23" font-weight="bold" fill="#f2f2f2">1</text>
<text x="22.5" y="444" text-anchor="middle" font-family="Liberation Sans" font-size="23" font-weight="bold" fill="#f2f2f2">2</text>
<text x="22.5" y="476" text-anchor="middle" font-family="Liberation Sans" font-size="23" font-weight="bold" fill="#f2f2f2">3</text>
<text x="22.5" y="508" text-anchor="middle" font-family="Liberation Sans" font-size="23" font-weight="bold" fill="#f2f2f2">4</text>
<text x="22.5" y="540" text-anchor="middle" font-family="Liberation Sans" font-size="23" font-weight="bold" fill="#f2f2f2">5</text>
<text x="22.5" y="572" text-anchor="middle" font-family="Liberation Sans" font-size="23" font-weight="bold" fill="#f2f2f2">6</text>
<text x="22.5" y="604" text-anchor="middle" font-family="Liberation Sans" font-size="23" font-weight="bold" fill="#f2f2f2">7</text>
<text x="22.5" y="636" text-anchor="middle" font-family="Liberation Sans" font-size="23" font-weight="bold" fill="#f2f2f2">8</text>
<text x="22.5" y="668" text-anchor="middle" font-family="Liberation Sans" font-size="23" font-weight="bold" fill="#f2f2f2">9</text>
<text x="22.5" y="700" text-anchor="middle" font-family="Liberation Sans" font-size="23" font-weight="bold" fill="#f2f2f2">10</text>
<text x="22.5" y="732" text-anchor="middle" font-family="Liberation Sans" font-size="23" font-weight="bold" fill="#f2f2f2">11</text>
<text x="22.5" y="764" text-anchor="middle" font-family="Liberation Sans" font-size="23" font-weight="bold" fill="#f2f2f2">12</text>
<text x="22.5" y="796" text-anchor="middle" font-family="Liberation Sans" font-size="23" font-weight="bold" fill="#f2f2f2">13</text>
<text x="22.5" y="828" text-anchor="middle" font-family="Liberation Sans" font-size="23" font-weight="bold" fill="#f2f2f2">14</text>
<text x="22.5" y="860" text-anchor="middle" font-family="Liberation Sans" font-size="23" font-weight="bold" fill="#f2f2f2">15</text>
<text x="22.5" y="892" text-anchor="middle" font-family="Liberation Sans" font-size="23" font-weight="bold" fill="#f2f2f2">16</text>
<text x="22.5" y="924" text-anchor="middle" font-family="Liberation Sans" font-size="23" font-weight="bold" fill="#f2f2f2">17</text>
<text x="22.5" y="956" text-anchor="middle" font-family="Liberation Sans" font-size="23" font-weight="bold" fill="#f2f2f2">18</text>
<text x="22.5" y="988" text-anchor="middle" font-family="Liberation Sans" font-size="23" font-weight="bold" fill="#f2f2f2">19</text>
<text x="22.5" y="1020" text-anchor="middle" font-family="Liberation Sans" font-size="23" font-weight="bold" fill="#f2f2f2">20</text>
<text x="22.5" y="1052" text-anchor="middle" font-family="Liberation Sans" font-size="23" font-weight="bold" fill="#f2f2f2">21</text>
<text x="22.5" y="1084" text-anchor="middle" font-family="Liberation Sans" font-size="23" font-weight="bold" fill="#f2f2f2">22</text>
<text x="22.5" y="1116" text-anchor="middle" font-family="Liberation Sans" font-size="23" font-weight="bold" fill="#f2f2f2">23</text>
<text x="22.5" y="1148" text-anchor="middle" font-family="Liberation Sans" font-size="23" font-weight="bold" fill="#f2f2f2">24</text>
<text x="22.5" y="1180" text-anchor="middle" font-family="Liberation Sans" font-size="23" font-weight="bold" fill="#f2f2f2">25</text>
<text x="22.5" y="1212" text-anchor="middle" font-family="Liberation Sans" font-size="23" font-weight="bold" fill="#f2f2f2">26</text>
<text x="22.5" y="1244" text-anchor="middle" font-family="Liberation Sans" font-size="23" font-weight="bold" fill="#f2f2f2">27</text>
<text x="22.5" y="1276" text-anchor="middle" font-family="Liberation Sans" font-size="23" font-weight="bold" fill="#f2f2f2">28</text>
<text x="22.5" y="1308" text-anchor="middle" font-family="Liberation Sans" font-size="23" font-weight="bold" fill="#f2f2f2">29</text>
<text x="22.5" y="1340" text-anchor="middle" font-family="Liberation Sans" font-size="23" font-weight="bold" fill="#f2f2f2">30</text>
<text x="22.5" y="1372" text-anchor="middle" font-family="Liberation Sans" font-size="23" font-weight="bold" fill="#f2f2f2">31</text>
<text x="22.5" y="1404" text-anchor="middle" font-family="Liberation Sans" font-size="23" font-weight="bold" fill="#f2f2f2">32</text>
<text x="22.5" y="1436" text-anchor="middle" font-family="Liberation Sans" font-size="23" font-weight="bold" fill="#f2f2f2">33</text>
<text x="22.5" y="1468" text-anchor="middle" font-family="Liberation Sans" font-size="23" font-weight="bold" fill="#f2f2f2">34</text>
<text x="22.5" y="1500" text-anchor="middle" font-family="Liberation Sans" font-size="23" font-weight="bold" fill="#f2f2f2">35</text>
<text x="22.5" y="1532" text-anchor="middle" font-family="Liberation Sans" font-size="23" font-weight="bold" fill="#f2f2f2">36</text>
<text x="22.5" y="1564" text-anchor="middle" font-family="Liberation Sans" font-size="23" font-weight="bold" fill="#f2f2f2">37</text>
<text x="22.5" y="1596" text-anchor="middle" font-family="Liberation Sans" font-size="23" font-weight="bold" fill="#f2f2f2">38</text>
<text x="22.5" y="1628" text-anchor="middle" font-family="Liberation Sans" font-size="23" font-weight="bold" fill="#f2f2f2">39</text>
<text x="22.5" y="1660" text-anchor="middle" font-family="Liberation Sans" font-size="23" font-weight="bold" fill="#f2f2f2">40</text>
<text x="22.5" y="1692" text-anchor="middle" font-family="Liberation Sans" font-size="23" font-weight="bold" fill="#f2f2f2">41</text>
<rect x="46" y="388" width="420" height="30" fill="#d9e1f2" />
<rect x="46" y="418" width="420" height="2" fill="#8eaadb" />
<rect x="46" y="450" width="812" height="32" fill="#d9e1f2" />
<rect x="46" y="482" width="812" height="2" fill="#8eaadb" />
<rect x="46" y="484" width="810" height="94" fill="#ffffff" />
<rect x="46" y="578" width="812" height="2" fill="#8eaadb" />
<rect x="46" y="580" width="812" height="32" fill="#d9e1f2" />
<defs><linearGradient id="fb" x1="0" y1="0" x2="0" y2="1"><stop offset="0" stop-color="#ffffff"/><stop offset="1" stop-color="#e6e6e6"/></linearGradient></defs>
<rect x="435" y="389" width="29.5" height="28" fill="url(#fb)" rx="2" stroke="#8a8a8a" stroke-width="1.6" />
<path d="M438.5,404 H448 L443.2,410 Z" fill="#6e6e6e" />
<path d="M446.5,394.5 H462 L456.5,401 V410 H452 V401 Z" fill="#6e6e6e" />
<rect x="46" y="452" width="204" height="30" fill="#ffffff" />
<rect x="48" y="454" width="170" height="26" fill="#d9e1f2" />
<rect x="219" y="454" width="31" height="26" fill="url(#fb)" />
<rect x="218" y="454" width="2" height="26" fill="#7a7a7a" />
<path d="M226,462.5 H242 L234,472 Z" fill="#7a7a7a" />
<text x="49.6" y="412.4" font-family="Liberation Sans" font-size="23.26" font-weight="normal" fill="#000000" stroke="#000000" stroke-width="0.35" textLength="45.6" lengthAdjust="spacingAndGlyphs" >Città</text>
<text x="256.1" y="412.4" font-family="Liberation Sans" font-size="23.26" font-weight="normal" fill="#000000" stroke="#000000" stroke-width="0.35" textLength="68.2" lengthAdjust="spacingAndGlyphs" >Milano</text>
<text x="49.6" y="475.5" font-family="Liberation Sans" font-size="23.26" font-weight="bold" fill="#000000" textLength="155.6" lengthAdjust="spacingAndGlyphs" >Etichette di riga</text>
<text x="255.5" y="475.5" font-family="Liberation Sans" font-size="23.26" font-weight="bold" fill="#000000" textLength="200.7" lengthAdjust="spacingAndGlyphs" >Conteggio di Genere</text>
<text x="471.5" y="475.5" font-family="Liberation Sans" font-size="23.26" font-weight="bold" fill="#000000" textLength="174.2" lengthAdjust="spacingAndGlyphs" >Conteggio di Città</text>
<text x="663.1" y="475.5" font-family="Liberation Sans" font-size="23.26" font-weight="bold" fill="#000000" textLength="183.1" lengthAdjust="spacingAndGlyphs" >Somma di Vendite</text>
<text x="49.6" y="507.5" font-family="Liberation Sans" font-size="23.26" font-weight="normal" fill="#000000" stroke="#000000" stroke-width="0.35" textLength="82.9" lengthAdjust="spacingAndGlyphs" >Gennaio</text>
<text x="50.1" y="539.5" font-family="Liberation Sans" font-size="23.26" font-weight="normal" fill="#000000" stroke="#000000" stroke-width="0.35" textLength="86.6" lengthAdjust="spacingAndGlyphs" >Febbraio</text>
<text x="50.1" y="571.5" font-family="Liberation Sans" font-size="23.26" font-weight="normal" fill="#000000" stroke="#000000" stroke-width="0.35" textLength="62.4" lengthAdjust="spacingAndGlyphs" >Marzo</text>
<text x="49.1" y="603.8" font-family="Liberation Sans" font-size="23.26" font-weight="bold" fill="#000000" textLength="191.6" lengthAdjust="spacingAndGlyphs" >Totale complessivo</text>
<text x="450.4" y="507.5" font-family="Liberation Sans" font-size="23.26" font-weight="normal" fill="#000000" stroke="#000000" stroke-width="0.35" textLength="11.3" lengthAdjust="spacingAndGlyphs" >1</text>
<text x="642.1" y="507.5" font-family="Liberation Sans" font-size="23.26" font-weight="normal" fill="#000000" stroke="#000000" stroke-width="0.35" textLength="11.3" lengthAdjust="spacingAndGlyphs" >1</text>
<text x="450.4" y="539.5" font-family="Liberation Sans" font-size="23.26" font-weight="normal" fill="#000000" stroke="#000000" stroke-width="0.35" textLength="11.3" lengthAdjust="spacingAndGlyphs" >1</text>
<text x="642.1" y="539.5" font-family="Liberation Sans" font-size="23.26" font-weight="normal" fill="#000000" stroke="#000000" stroke-width="0.35" textLength="11.3" lengthAdjust="spacingAndGlyphs" >1</text>
<text x="450.4" y="571.5" font-family="Liberation Sans" font-size="23.26" font-weight="normal" fill="#000000" stroke="#000000" stroke-width="0.35" textLength="11.3" lengthAdjust="spacingAndGlyphs" >1</text>
<text x="642.1" y="571.5" font-family="Liberation Sans" font-size="23.26" font-weight="normal" fill="#000000" stroke="#000000" stroke-width="0.35" textLength="11.3" lengthAdjust="spacingAndGlyphs" >1</text>
<text x="792.7" y="507.5" font-family="Liberation Sans" font-size="23.26" font-weight="normal" fill="#000000" stroke="#000000" stroke-width="0.35" textLength="59.0" lengthAdjust="spacingAndGlyphs" >13400</text>
<text x="816.1" y="539.5" font-family="Liberation Sans" font-size="23.26" font-weight="normal" fill="#000000" stroke="#000000" stroke-width="0.35" textLength="35.6" lengthAdjust="spacingAndGlyphs" >350</text>
<text x="804.6" y="571.5" font-family="Liberation Sans" font-size="23.26" font-weight="normal" fill="#000000" stroke="#000000" stroke-width="0.35" textLength="47.1" lengthAdjust="spacingAndGlyphs" >1999</text>
<text x="448.1" y="603.8" font-family="Liberation Sans" font-size="23.26" font-weight="bold" fill="#000000" textLength="13.6" lengthAdjust="spacingAndGlyphs" >3</text>
<text x="639.8" y="603.8" font-family="Liberation Sans" font-size="23.26" font-weight="bold" fill="#000000" textLength="13.6" lengthAdjust="spacingAndGlyphs" >3</text>
<text x="791.8" y="603.8" font-family="Liberation Sans" font-size="23.26" font-weight="bold" fill="#000000" textLength="59.9" lengthAdjust="spacingAndGlyphs" >15749</text>
<rect x="42" y="448" width="212" height="4" fill="#1e7145" />
<rect x="42" y="448" width="4" height="38" fill="#1e7145" />
<rect x="250" y="448" width="4" height="30" fill="#1e7145" />
<rect x="42" y="482" width="204" height="4" fill="#1e7145" />
<rect x="246" y="478" width="10" height="10" fill="#1e7145" />
<defs><filter id="sh" x="-20%" y="-20%" width="140%" height="140%"><feGaussianBlur stdDeviation="14"/></filter></defs>
<rect x="998" y="414" width="430" height="536" fill="rgba(0,0,0,0.2)" rx="18" filter="url(#sh)"/>
<rect x="1001.5" y="407" width="423" height="537" fill="#352725" rx="15" stroke="#1a1a1a" stroke-width="1.5" />
<rect x="1003" y="408.5" width="420" height="534" fill="none" rx="14" stroke="#54494700" stroke-width="0" />
<path d="M1002.5,446 V422 A14,14 0 0 1 1016.5,408 H1409.5 A14,14 0 0 1 1423.5,422 V446 Z" fill="#3e3231" />
<rect x="1002" y="445" width="422" height="2" fill="#151010" />
<circle cx="1021" cy="427" r="9.2" fill="#fe5f57" />
<text x="1187.6" y="434" font-family="Liberation Sans" font-size="23.26" font-weight="normal" fill="#c9c0be" stroke="#c9c0be" stroke-width="0.55" textLength="49.7" lengthAdjust="spacingAndGlyphs" >Città</text>
<rect x="1044" y="490" width="337.5" height="31.5" fill="#3e3230" rx="8" stroke="#574b49" stroke-width="1.3" />
<circle cx="1066.8" cy="503.3" r="7.6" fill="none" stroke="#efe8e6" stroke-width="2" />
<line x1="1072.3" y1="509" x2="1079" y2="515.8" stroke="#efe8e6" stroke-width="2.3" stroke-linecap="round"/>
<text x="1096.1" y="514.3" font-family="Liberation Sans" font-size="23.26" font-weight="normal" fill="#7d7170" stroke="#7d7170" stroke-width="0.55" textLength="60.6" lengthAdjust="spacingAndGlyphs" >Cerca</text>
<rect x="1039.5" y="537.5" width="347" height="321" fill="#2e1f1d" rx="4" stroke="#2f6e47" stroke-width="7" />
<rect x="1062" y="680" width="302" height="40" fill="#006428" rx="10" />
<defs><linearGradient id="gc" x1="0" y1="0" x2="0" y2="1"><stop offset="0" stop-color="#1b7a4a"/><stop offset="1" stop-color="#23925a"/></linearGradient><linearGradient id="nc" x1="0" y1="0" x2="0" y2="1"><stop offset="0" stop-color="#4e4240"/><stop offset="1" stop-color="#625654"/></linearGradient><linearGradient id="rc" x1="0" y1="0" x2="0" y2="1"><stop offset="0" stop-color="#3f9c66"/><stop offset="1" stop-color="#4aa874"/></linearGradient></defs>
<rect x="1094" y="568" width="24" height="24" fill="url(#gc)" rx="4.5" />
<rect x="1100" y="578.5" width="12" height="3.0" fill="#f2f2f2" />
<rect x="1094" y="608" width="24" height="24" fill="url(#gc)" rx="4.5" />
<path d="M1099,619.5 L1104,625.5 L1113,613" fill="none" stroke="#f4f4f4" stroke-width="2.8" stroke-linecap="round" stroke-linejoin="round"/>
<rect x="1094" y="648" width="24" height="24" fill="url(#nc)" rx="4.5" />
<rect x="1094" y="688" width="24" height="24" fill="url(#rc)" rx="4.5" />
<text x="1126.1" y="588" font-family="Liberation Sans" font-size="22.53" font-weight="normal" fill="#ece4e2" stroke="#ece4e2" stroke-width="0.55" textLength="173.2" lengthAdjust="spacingAndGlyphs" >(Seleziona tutto)</text>
<text x="1126.1" y="628" font-family="Liberation Sans" font-size="22.53" font-weight="normal" fill="#ece4e2" stroke="#ece4e2" stroke-width="0.55" textLength="68.2" lengthAdjust="spacingAndGlyphs" >Milano</text>
<text x="1126.1" y="668" font-family="Liberation Sans" font-size="22.53" font-weight="normal" fill="#ece4e2" stroke="#ece4e2" stroke-width="0.55" textLength="66.1" lengthAdjust="spacingAndGlyphs" >Napoli</text>
<text x="1126.1" y="708" font-family="Liberation Sans" font-size="22.53" font-weight="normal" fill="#f0f0f0" stroke="#f0f0f0" stroke-width="0.55" textLength="58.2" lengthAdjust="spacingAndGlyphs" >Roma</text>
<rect x="1206" y="872" width="178" height="32" fill="#675a58" rx="8" />
<text x="1221.0" y="896" font-family="Liberation Sans" font-size="23.98" font-weight="normal" fill="#ebe3e1" stroke="#ebe3e1" stroke-width="0.55" textLength="145.3" lengthAdjust="spacingAndGlyphs" >Cancella filtro</text>
<rect x="0" y="1700" width="2278" height="2" fill="#9c9c9c" />
<rect x="0" y="1702" width="2278" height="52" fill="#333333" />
<path d="M30.5,1730 L44.5,1721 V1739 Z" fill="#6e6e6e" />
<path d="M76,1721 L90,1730 L76,1739 Z" fill="#6e6e6e" />
<rect x="120" y="1702" width="2" height="42" fill="#5a5a5a" />
<rect x="121" y="1702" width="158" height="52" fill="#222222" />
<rect x="436" y="1702" width="159" height="52" fill="#222222" />
<rect x="594" y="1702" width="2" height="42" fill="#5a5a5a" />
<rect x="670" y="1702" width="2" height="42" fill="#5a5a5a" />
<path d="M279,1702 H436 V1740 A6,6 0 0 1 430,1746 H285 A6,6 0 0 1 279,1740 Z" fill="#ffffff" />
<text x="158.7" y="1736.5" font-family="Liberation Sans" font-size="24.71" font-weight="bold" fill="#8a8a8a" textLength="80.0" lengthAdjust="spacingAndGlyphs" >Foglio1</text>
<text x="315.7" y="1736.5" font-family="Liberation Sans" font-size="24.71" font-weight="bold" fill="#1d8a4e" textLength="84.3" lengthAdjust="spacingAndGlyphs" >Foglio5</text>
<text x="475.0" y="1736.5" font-family="Liberation Sans" font-size="24.71" font-weight="bold" fill="#8a8a8a" textLength="81.7" lengthAdjust="spacingAndGlyphs" >Foglio6</text>
<path d="M634,1719.5 V1738 M625,1728.8 H643.5" fill="none" stroke="#c4c4c4" stroke-width="3.6" />
<defs><linearGradient id="sb" x1="0" y1="0" x2="0" y2="1"><stop offset="0" stop-color="#4a4a4a"/><stop offset="1" stop-color="#3e3e3e"/></linearGradient></defs>
<rect x="0" y="1754" width="2880" height="2" fill="#151515" />
<rect x="0" y="1756" width="2880" height="44" fill="url(#sb)" />
<text x="48.0" y="1786" font-family="Liberation Sans" font-size="24.71" font-weight="normal" fill="#e0e0e0" stroke="#e0e0e0" stroke-width="0.55" textLength="74.7" lengthAdjust="spacingAndGlyphs" >Pronto</text>
<circle cx="175" cy="1766.9" r="4" fill="none" stroke="#f0f0f0" stroke-width="1.9" />
<path d="M180,1775 L185,1772.8 C188,1771.5 187.5,1767.5 184.5,1768.2 C181,1769.5 178,1771 175,1771 C172,1771 169,1769.5 165.5,1768.2 C162.5,1767.5 162,1771.5 165,1772.8 L169.5,1774.5 C169.5,1779 168.5,1784 166.5,1788.5 C165.5,1791 169.5,1792 170.5,1789.5 L174.5,1781.5 C175.5,1782.5 176,1783.5 176.5,1785.5" fill="none" stroke="#f0f0f0" stroke-width="1.9" stroke-linecap="round" stroke-linejoin="round"/>
<path d="M178,1778 L191.4,1791.2 M191.4,1778 L178,1791.2" fill="none" stroke="#f0f0f0" stroke-width="1.8" />
<text x="198.3" y="1786" font-family="Liberation Sans" font-size="24.71" font-weight="normal" fill="#e0e0e0" stroke="#e0e0e0" stroke-width="0.55" textLength="237.1" lengthAdjust="spacingAndGlyphs" >Accessibilità: verifica</text>
<rect x="2242" y="1756" width="74" height="44" fill="#5a5a5a" />
<rect x="2267" y="1765" width="25" height="24" fill="none" stroke="#f0f0f0" stroke-width="2" />
<rect x="2274.3" y="1765" width="2.0" height="24" fill="#f0f0f0" />
<rect x="2282.6" y="1765" width="2.0" height="24" fill="#f0f0f0" />
<rect x="2267" y="1772" width="25" height="2" fill="#f0f0f0" />
<rect x="2267" y="1780" width="25" height="2" fill="#f0f0f0" />
<rect x="2338" y="1765" width="26" height="24" fill="none" stroke="#e8e8e8" stroke-width="2" />
<rect x="2343" y="1769.5" width="16" height="15" fill="none" stroke="#e8e8e8" stroke-width="1.6" />
<rect x="2346" y="1772.7" width="10" height="1.599999999999909" fill="#e8e8e8" />
<rect x="2346" y="1776.2" width="10" height="1.599999999999909" fill="#e8e8e8" />
<rect x="2346" y="1779.7" width="10" height="1.599999999999909" fill="#e8e8e8" />
<rect x="2409" y="1765" width="26" height="24" fill="none" stroke="#e8e8e8" stroke-width="2" />
<path d="M2414,1765 V1778 H2427 V1765 M2420.5,1765 V1778" fill="none" stroke="#e8e8e8" stroke-width="1.8" />
<rect x="2474" y="1775.5" width="16" height="3.5" fill="#f0f0f0" />
<rect x="2504" y="1774" width="200" height="8" fill="#7c7c7c" rx="4" />
<circle cx="2604" cy="1777.5" r="16" fill="#a6a6a6" />
<path d="M2726,1769 V1786 M2717.5,1777.5 H2734.5" fill="none" stroke="#f0f0f0" stroke-width="3.4" />
<text x="2768.0" y="1785.5" font-family="Liberation Sans" font-size="24.42" font-weight="normal" fill="#f0f0f0" stroke="#f0f0f0" stroke-width="0.55" textLength="63.5" lengthAdjust="spacingAndGlyphs" >100%</text>
<rect x="2278" y="344" width="2" height="1410" fill="#050505" />
<rect x="2280" y="344" width="600" height="1410" fill="#323232" />
<text x="2315.2" y="382.5" font-family="Liberation Sans" font-size="32.85" font-weight="normal" fill="#e4e4e4" stroke="#e4e4e4" stroke-width="1.1" textLength="269.6" lengthAdjust="spacingAndGlyphs" >Campi tabella pivot</text>
<circle cx="2850" cy="371" r="14.3" fill="#9d9d9d" />
<path d="M2843.5,364.5 L2856.5,377.5 M2856.5,364.5 L2843.5,377.5" fill="none" stroke="#323232" stroke-width="2.6" />
<text x="2307.9" y="467" font-family="Liberation Sans" font-size="28.34" font-weight="bold" fill="#686868" stroke="#686868" stroke-width="0.5" textLength="184.5" lengthAdjust="spacingAndGlyphs" >NOME CAMPO</text>
<rect x="2590.5" y="442.5" width="276.5" height="31" fill="#303030" rx="8" stroke="#4a4a4a" stroke-width="1.5" />
<circle cx="2613.5" cy="455.5" r="7.6" fill="none" stroke="#e0e0e0" stroke-width="2" />
<line x1="2619" y1="461" x2="2625" y2="467.2" stroke="#e0e0e0" stroke-width="2.2" stroke-linecap="round"/>
<text x="2641.4" y="466" font-family="Liberation Sans" font-size="23.98" font-weight="normal" fill="#6c6c6c" stroke="#6c6c6c" stroke-width="0.55" textLength="130.6" lengthAdjust="spacingAndGlyphs" >Cerca campi</text>
<rect x="2292" y="512" width="575" height="228" fill="#2c1f1c" />
<rect x="2292" y="600" width="575" height="44" fill="#474747" />
<defs><linearGradient id="cb" x1="0" y1="0" x2="0" y2="1"><stop offset="0" stop-color="#5c504e"/><stop offset="1" stop-color="#6e6462"/></linearGradient><linearGradient id="cb2" x1="0" y1="0" x2="0" y2="1"><stop offset="0" stop-color="#6a6a6a"/><stop offset="1" stop-color="#7e7e7e"/></linearGradient></defs>
<rect x="2308" y="520.5" width="27.5" height="27.5" fill="url(#cb)" rx="5" />
<path d="M2314,534 L2320,540.5 L2330,526.5" fill="none" stroke="#f0f0f0" stroke-width="3" stroke-linecap="round" stroke-linejoin="round"/>
<text x="2347.6" y="543.5" font-family="Liberation Sans" font-size="28.05" font-weight="normal" fill="#f2f2f2" stroke="#f2f2f2" stroke-width="0.55" textLength="88.3" lengthAdjust="spacingAndGlyphs" >Genere</text>
<rect x="2308" y="564.5" width="27.5" height="27.5" fill="url(#cb)" rx="5" />
<path d="M2314,578 L2320,584.5 L2330,570.5" fill="none" stroke="#f0f0f0" stroke-width="3" stroke-linecap="round" stroke-linejoin="round"/>
<text x="2347.6" y="587.5" font-family="Liberation Sans" font-size="28.05" font-weight="normal" fill="#f2f2f2" stroke="#f2f2f2" stroke-width="0.55" textLength="56.8" lengthAdjust="spacingAndGlyphs" >Data</text>
<rect x="2308" y="608.5" width="27.5" height="27.5" fill="url(#cb2)" rx="5" />
<path d="M2314,622 L2320,628.5 L2330,614.5" fill="none" stroke="#f0f0f0" stroke-width="3" stroke-linecap="round" stroke-linejoin="round"/>
<text x="2347.6" y="631.5" font-family="Liberation Sans" font-size="28.05" font-weight="normal" fill="#f2f2f2" stroke="#f2f2f2" stroke-width="0.55" textLength="57.6" lengthAdjust="spacingAndGlyphs" >Città</text>
<rect x="2308" y="652.5" width="27.5" height="27.5" fill="url(#cb)" rx="5" />
<path d="M2314,666 L2320,672.5 L2330,658.5" fill="none" stroke="#f0f0f0" stroke-width="3" stroke-linecap="round" stroke-linejoin="round"/>
<text x="2347.6" y="675.5" font-family="Liberation Sans" font-size="28.05" font-weight="normal" fill="#f2f2f2" stroke="#f2f2f2" stroke-width="0.55" textLength="92.3" lengthAdjust="spacingAndGlyphs" >Vendite</text>
<circle cx="2580" cy="765" r="5.5" fill="#4a4a4a" />
<path d="M2300,800 C2300,794 2328,794 2328,800 C2328,803 2318,808 2317,812 V821 H2311 V812 C2310,808 2300,803 2300,800 Z" fill="#a0a0a0" />
<ellipse cx="2314" cy="800" rx="9.5" ry="3" fill="#323232"/>
<text x="2347.5" y="819" font-family="Liberation Sans" font-size="28.34" font-weight="normal" fill="#e2e2e2" stroke="#e2e2e2" stroke-width="0.55" textLength="52.9" lengthAdjust="spacingAndGlyphs" >Filtri</text>
<rect x="2606" y="799" width="6.5" height="19.5" fill="#a0a0a0" />
<rect x="2616" y="799" width="6.5" height="19.5" fill="#a0a0a0" />
<rect x="2626.5" y="799" width="6.5" height="19.5" fill="#a0a0a0" />
<text x="2653.4" y="819" font-family="Liberation Sans" font-size="28.34" font-weight="normal" fill="#e2e2e2" stroke="#e2e2e2" stroke-width="0.55" textLength="100.2" lengthAdjust="spacingAndGlyphs" >Colonne</text>
<rect x="2303.5" y="1253" width="21.0" height="6" fill="#a0a0a0" />
<rect x="2303.5" y="1262.5" width="21.0" height="6.0" fill="#a0a0a0" />
<rect x="2303.5" y="1272" width="21.0" height="6" fill="#a0a0a0" />
<text x="2347.9" y="1275.5" font-family="Liberation Sans" font-size="28.34" font-weight="normal" fill="#e2e2e2" stroke="#e2e2e2" stroke-width="0.55" textLength="68.4" lengthAdjust="spacingAndGlyphs" >Righe</text>
<path d="M2631,1256 V1251 H2606 L2619,1264.5 L2606,1278 H2631 V1273" fill="none" stroke="#a0a0a0" stroke-width="4" stroke-linejoin="miter"/>
<text x="2650.9" y="1275.5" font-family="Liberation Sans" font-size="28.34" font-weight="normal" fill="#e2e2e2" stroke="#e2e2e2" stroke-width="0.55" textLength="69.3" lengthAdjust="spacingAndGlyphs" >Valori</text>
<rect x="2292" y="840" width="272" height="376" fill="#2c1f1c" />
<rect x="2598" y="840" width="270" height="376" fill="#2c1f1c" />
<rect x="2292" y="1300" width="272" height="376" fill="#2c1f1c" />
<rect x="2596" y="1300" width="272" height="376" fill="#2c1f1c" />
<rect x="2304" y="840" width="248" height="44" fill="#ffffff" />
<circle cx="2320.5" cy="857.5" r="2.7" fill="#a8a8a8" />
<circle cx="2320.5" cy="867.5" r="2.7" fill="#a8a8a8" />
<text x="2333.1" y="870" font-family="Liberation Sans" font-size="23.69" font-weight="normal" fill="#2a2a2a" textLength="50.1" lengthAdjust="spacingAndGlyphs" >Città</text>
<circle cx="2535.5" cy="862" r="12.3" fill="#b8b8b8" />
<text x="2536.0" y="870" text-anchor="middle" font-family="Liberation Serif" font-style="italic" font-size="22" fill="#ffffff">i</text>
<rect x="2610" y="840" width="246" height="44" fill="#ffffff" />
<circle cx="2626.5" cy="857.5" r="2.7" fill="#a8a8a8" />
<circle cx="2626.5" cy="867.5" r="2.7" fill="#a8a8a8" />
<text x="2640.1" y="870" font-family="Liberation Sans" font-size="23.69" font-weight="normal" fill="#2a2a2a" textLength="58.2" lengthAdjust="spacingAndGlyphs" >Valori</text>
<rect x="2304" y="1300" width="248" height="44" fill="#ffffff" />
<circle cx="2320.5" cy="1317.5" r="2.7" fill="#a8a8a8" />
<circle cx="2320.5" cy="1327.5" r="2.7" fill="#a8a8a8" />
<text x="2333.9" y="1330" font-family="Liberation Sans" font-size="23.69" font-weight="normal" fill="#2a2a2a" textLength="48.9" lengthAdjust="spacingAndGlyphs" >Data</text>
<circle cx="2535.5" cy="1322" r="12.3" fill="#b8b8b8" />
<text x="2536.0" y="1330" text-anchor="middle" font-family="Liberation Serif" font-style="italic" font-size="22" fill="#ffffff">i</text>
<rect x="2608" y="1300" width="248" height="132" fill="#ffffff" />
<circle cx="2625" cy="1317.5" r="2.7" fill="#a8a8a8" />
<circle cx="2625" cy="1327.5" r="2.7" fill="#a8a8a8" />
<text x="2638.1" y="1331.3" font-family="Liberation Sans" font-size="23.69" font-weight="normal" fill="#2a2a2a" textLength="186.0" lengthAdjust="spacingAndGlyphs" >Conteggio di Ge...</text>
<circle cx="2840" cy="1322" r="12.3" fill="#b8b8b8" />
<text x="2840.5" y="1330" text-anchor="middle" font-family="Liberation Serif" font-style="italic" font-size="22" fill="#ffffff">i</text>
<circle cx="2625" cy="1361.5" r="2.7" fill="#a8a8a8" />
<circle cx="2625" cy="1371.5" r="2.7" fill="#a8a8a8" />
<text x="2638.1" y="1375.3" font-family="Liberation Sans" font-size="23.69" font-weight="normal" fill="#2a2a2a" textLength="186.7" lengthAdjust="spacingAndGlyphs" >Conteggio di Cit...</text>
<circle cx="2840" cy="1366" r="12.3" fill="#b8b8b8" />
<text x="2840.5" y="1374" text-anchor="middle" font-family="Liberation Serif" font-style="italic" font-size="22" fill="#ffffff">i</text>
<circle cx="2625" cy="1405.5" r="2.7" fill="#a8a8a8" />
<circle cx="2625" cy="1415.5" r="2.7" fill="#a8a8a8" />
<text x="2638.1" y="1419.3" font-family="Liberation Sans" font-size="23.69" font-weight="normal" fill="#2a2a2a" textLength="185.7" lengthAdjust="spacingAndGlyphs" >Somma di Vendi...</text>
<circle cx="2840" cy="1410" r="12.3" fill="#b8b8b8" />
<text x="2840.5" y="1418" text-anchor="middle" font-family="Liberation Serif" font-style="italic" font-size="22" fill="#ffffff">i</text>
<text x="2407.9" y="1719.5" font-family="Liberation Sans" font-size="26.89" font-weight="normal" fill="#6a6a6a" stroke="#6a6a6a" stroke-width="0.55" textLength="343.9" lengthAdjust="spacingAndGlyphs" >Trascinare i campi nelle aree</text>
</svg>
</body></html>
